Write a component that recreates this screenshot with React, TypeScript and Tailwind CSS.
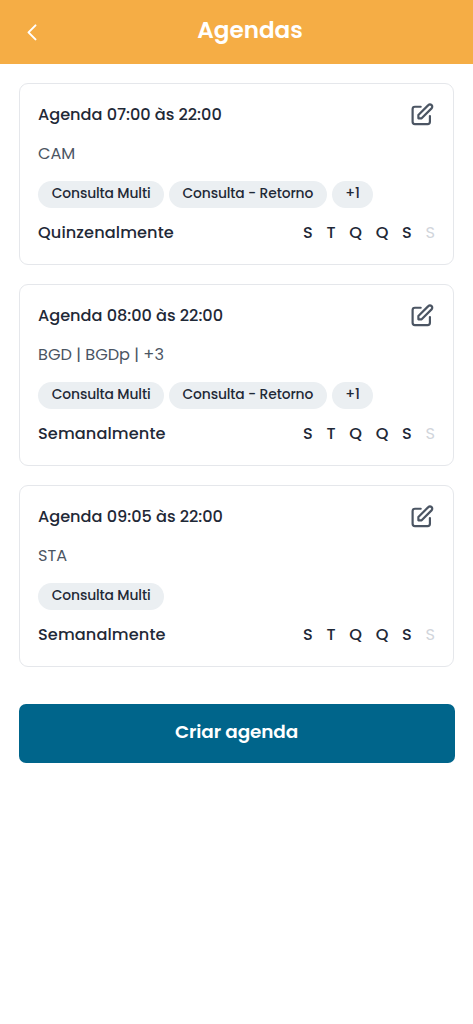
type Agenda = {
  title: string;
  places: string;
  services: string[];
  frequency: string;
};

const agendas: Agenda[] = [
  {
    title: "Agenda 07:00 às 22:00",
    places: "CAM",
    services: ["Consulta Multi", "Consulta - Retorno", "+1"],
    frequency: "Quinzenalmente",
  },
  {
    title: "Agenda 08:00 às 22:00",
    places: "BGD | BGDp | +3",
    services: ["Consulta Multi", "Consulta - Retorno", "+1"],
    frequency: "Semanalmente",
  },
  {
    title: "Agenda 09:05 às 22:00",
    places: "STA",
    services: ["Consulta Multi"],
    frequency: "Semanalmente",
  },
];

const days = [
  { label: "S", active: true },
  { label: "T", active: true },
  { label: "Q", active: true },
  { label: "Q", active: true },
  { label: "S", active: true },
  { label: "S", active: false },
];

function EditIcon() {
  return (
    <svg className="w-[27.7px] h-[27.7px]" viewBox="0 0 24 24" fill="none" stroke="currentColor" strokeWidth={1.9} strokeLinecap="round" strokeLinejoin="round">
      <path d="M11 5H6a2 2 0 00-2 2v11a2 2 0 002 2h11a2 2 0 002-2v-5m-1.414-9.414a2 2 0 112.828 2.828L11.828 15H9v-2.828l8.586-8.586z" />
    </svg>
  );
}

function AgendaCard({ agenda }: { agenda: Agenda }) {
  return (
    <div className="h-[182px] rounded-[9px] border border-[#e5e7eb] bg-white px-[18px] pt-[17px] whitespace-nowrap">
      <div className="flex items-center justify-between h-7">
        <h2 className="text-[16.17px] font-medium leading-7 tracking-[-0.02px]">{agenda.title}</h2>
        <button type="button" aria-label="Editar" className="-mr-[0.7px] pt-[0.5px] text-[#4b5563]">
          <EditIcon />
        </button>
      </div>

      <p className="mt-[11px] h-7 text-[16.17px] font-normal leading-7 text-[#4b5563]">{agenda.places}</p>

      <div className="mt-[13px] flex gap-[4.6px]">
        {agenda.services.map((service) => (
          <span key={service} className="h-[27px] rounded-full bg-[#ebeff2] px-[13.7px] text-[13.86px] font-medium leading-[25px] tracking-[-0.12px]">
            {service}
          </span>
        ))}
      </div>

      <div className="mt-[11px] flex items-center justify-between h-7">
        <span className="text-[16.17px] font-medium leading-7 tracking-[0.1px]">{agenda.frequency}</span>
        <div className="flex gap-[13.7px] text-[16.17px] leading-7">
          {days.map((day, i) => (
            <span key={i} className={day.active ? "font-medium text-[#1f2937]" : "text-[#d1d5db]"}>
              {day.label}
            </span>
          ))}
        </div>
      </div>
    </div>
  );
}

export default function App() {
  return (
    <div className="min-h-screen bg-white text-[#1f2937] font-[Poppins,Inter,sans-serif]">
      {/* Header */}
      <header className="grid h-16 grid-cols-[64px_1fr_64px] items-center bg-[#f5ad45] text-white">
        <button type="button" aria-label="Voltar" className="flex justify-center">
          <svg className="w-[10px] h-[18px]" viewBox="0 0 10 18" fill="none" stroke="currentColor" strokeWidth={2} strokeLinecap="round" strokeLinejoin="round">
            <path d="M8.5 2.4L1.5 9.4l7 7" />
          </svg>
        </button>
        <h1 className="pb-1 pl-[27px] text-center text-[23.1px] font-semibold">Agendas</h1>
      </header>

      <main className="px-[18.5px] pt-[18.5px]">
        <div className="flex flex-col gap-[19px] px-[0.5px]">
          {agendas.map((agenda) => (
            <AgendaCard key={agenda.title} agenda={agenda} />
          ))}
        </div>

        <button type="button" className="mt-[37px] h-[59px] w-full rounded-[7px] bg-[#00658b] pb-[3px] text-[18.4px] font-semibold tracking-[-0.1px] text-white">
          Criar agenda
        </button>
      </main>
    </div>
  );
}
